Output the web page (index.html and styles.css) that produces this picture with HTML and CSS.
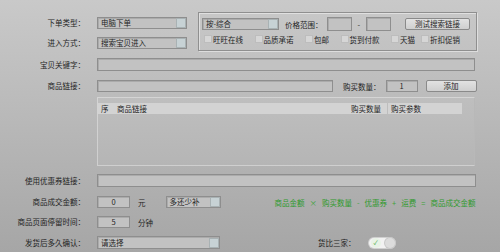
FILE: index.html
```html
<!DOCTYPE html>
<html lang="zh-CN">
<head>
<meta charset="utf-8">
<title>下单设置</title>
<link rel="stylesheet" href="styles.css">
</head>
<body>
<div class="page">
  <div class="top">
    <div class="label">下单类型：</div>
    <div class="field select"><span>电脑下单</span><i class="arrow"></i></div>
    <div class="group">
      <div class="grow1">
        <div class="field select sort"><span>按-综合</span><i class="arrow"></i></div>
        <span class="price-label">价格范围：</span>
        <div class="field price"></div>
        <span class="dash">-</span>
        <div class="field price"></div>
        <button class="btn test">测试搜索链接</button>
      </div>
      <div class="grow2">
        <label class="check"><i class="box"></i>旺旺在线</label>
        <label class="check"><i class="box"></i>品质承诺</label>
        <label class="check"><i class="box"></i>包邮</label>
        <label class="check"><i class="box"></i>货到付款</label>
        <label class="check"><i class="box"></i>天猫</label>
        <label class="check last"><i class="box"></i>折扣促销</label>
      </div>
    </div>
    <div class="label">进入方式：</div>
    <div class="field select"><span>搜索宝贝进入</span><i class="arrow"></i></div>
  </div>

  <div class="row kw">
    <div class="label">宝贝关键字：</div>
    <div class="field wide"></div>
  </div>

  <div class="row link">
    <div class="label">商品链接：</div>
    <div class="field linkin"></div>
    <span class="qty-label">购买数量：</span>
    <div class="field qty">1</div>
    <button class="btn add">添加</button>
  </div>

  <div class="table">
    <div class="thead">
      <span class="c-no">序</span>
      <span class="c-link">商品链接</span>
      <span class="c-qty">购买数量</span>
      <span class="c-param">购买参数</span>
    </div>
  </div>

  <div class="row coupon">
    <div class="label">使用优惠券链接：</div>
    <div class="field wide2"></div>
  </div>

  <div class="row amount">
    <div class="label">商品成交金额：</div>
    <div class="field num">0</div>
    <span class="unit">元</span>
    <div class="field select small"><span>多还少补</span><i class="arrow"></i></div>
    <span class="formula">商品金额<b>×</b>购买数量<b>-</b>优惠券<b>+</b>运费<b>=</b>商品成交金额</span>
  </div>

  <div class="row stay">
    <div class="label">商品页面停留时间：</div>
    <div class="field num">5</div>
    <span class="unit">分钟</span>
  </div>

  <div class="row confirm">
    <div class="label">发货后多久确认：</div>
    <div class="field select mid"><span>请选择</span><i class="arrow"></i></div>
    <span class="compare">货比三家：</span>
    <span class="toggle"><i class="knob on">✓</i><i class="knob off"></i></span>
  </div>
</div>
</body>
</html>
```

FILE: styles.css
```css
* { box-sizing: border-box; margin: 0; padding: 0; }
html, body { width: 500px; height: 252px; overflow: hidden; }
body {
  background: linear-gradient(#c9c9c9, #a6a6a6);
  font-family: "Noto Sans CJK SC", "Noto Sans", sans-serif;
  font-size: 7.5px;
  color: #1f1f1f;
}
.page { padding-top: 12px; }

.top {
  display: grid;
  grid-template-columns: 85px 90px 278px;
  grid-template-rows: 20px 19px;
  column-gap: 12px;
}
.label { text-align: right; line-height: 12px; white-space: nowrap; }
.top > .label, .top > .select { margin-top: 5px; }

.field {
  height: 12px;
  border: 1px solid #8e8e8e;
  background: #c2c2c2;
  box-shadow: inset 1px 1px 0 #ababab;
  display: flex;
  align-items: center;
  padding-left: 3px;
  line-height: 10px;
  white-space: nowrap;
}
.select .arrow {
  margin-left: auto;
  width: 10px;
  height: 10px;
  background: #c7d2d5;
  border: 1px solid #a9b2b4;
}

.group {
  grid-column: 3;
  grid-row: 1 / 3;
  margin-left: -1px;
  border: 1px solid #8f8f8f;
  box-shadow: inset 1px 1px 0 rgba(255,255,255,.45), 1px 1px 0 rgba(255,255,255,.45);
  padding: 4px 3px 0;
}
.grow1 { display: flex; align-items: center; height: 14px; }
.sort { width: 77px; }
.price-label { margin-left: 6px; }
.price { width: 25px; height: 14px; margin-left: 4px; }
.dash { margin: 0 6px 0 6px; }
.price + .dash + .price { margin-left: 0; }
.btn {
  font: inherit;
  color: #1f1f1f;
  height: 12px;
  line-height: 10px;
  border: 1px solid #8a8a8a;
  border-radius: 2px;
  background: linear-gradient(#e2e2e2, #cfcfcf);
}
.test { width: 65px; margin-left: 14px; }
.grow2 { display: flex; align-items: center; height: 12px; margin-top: 2px; padding-left: 2px; gap: 11.5px; }
.check { display: flex; align-items: center; white-space: nowrap; }
.box {
  width: 8px; height: 8px;
  background: #d6d6d6;
  border: 1px solid #bdbdbd;
  margin-right: 1px;
}
.check.last { margin-left: -5.5px; }

.row { display: flex; align-items: center; }
.row .label { width: 85px; margin-right: 12px; flex: none; }
.kw { margin-top: 7px; height: 13px; }
.kw .field { height: 13px; }
.wide { width: 378px; }
.link { margin-top: 9px; height: 12px; }
.linkin { width: 236px; }
.qty-label { margin-left: 10px; }
.qty { width: 32px; margin-left: 5px; justify-content: center; padding-left: 0; }
.add { width: 51px; margin-left: 8px; }

.table {
  margin: 5px 0 0 97px;
  width: 378px;
  height: 69px;
  border: 1px solid rgba(255,255,255,.35);
  border-right-color: #b8b8b8;
  background: rgba(255,255,255,.05);
  padding-top: 5px;
}
.thead {
  display: flex;
  align-items: center;
  height: 11px;
  margin-right: 12px;
  background: #d3d3d3;
  line-height: 11px;
  white-space: nowrap;
}
.c-no { width: 19px; padding-left: 3px; }
.c-link { width: 234px; }
.c-qty { width: 37px; border-right: 1px solid #bdbdbd; }
.c-param { padding-left: 3px; }

.coupon { margin-top: 8px; height: 13px; }
.coupon .field { height: 13px; }
.wide2 { width: 379px; }

.amount { margin-top: 9px; height: 12px; }
.num { width: 33px; justify-content: center; padding-left: 0; }
.unit { margin-left: 8px; }
.small { width: 55px; margin-left: 20px; }
.formula { margin-left: 54px; color: #2f9a2c; white-space: nowrap; }
.formula b { font-weight: normal; margin: 0 5px; color: #3da33a; }

.stay { margin-top: 8px; height: 12px; }
.confirm { margin-top: 8px; height: 13px; }
.confirm .field { height: 13px; }
.mid { width: 123px; }
.compare { margin-left: 98px; }
.toggle {
  display: flex;
  align-items: center;
  margin-left: 13px;
  width: 26px;
  height: 10px;
  border-radius: 5px;
  background: #f2f2f2;
  box-shadow: 0 0 0 1px #d0d0d0;
}
.knob {
  width: 10px; height: 10px;
  border-radius: 50%;
  font-style: normal;
  font-size: 6px;
  line-height: 10px;
  text-align: center;
}
.knob.on { background: #e8f3e6; color: #3aa238; margin-left: 2px; }
.knob.off { margin-left: auto; background: #dcdcdc; box-shadow: 0 0 0 1px #c8c8c8; }
```
